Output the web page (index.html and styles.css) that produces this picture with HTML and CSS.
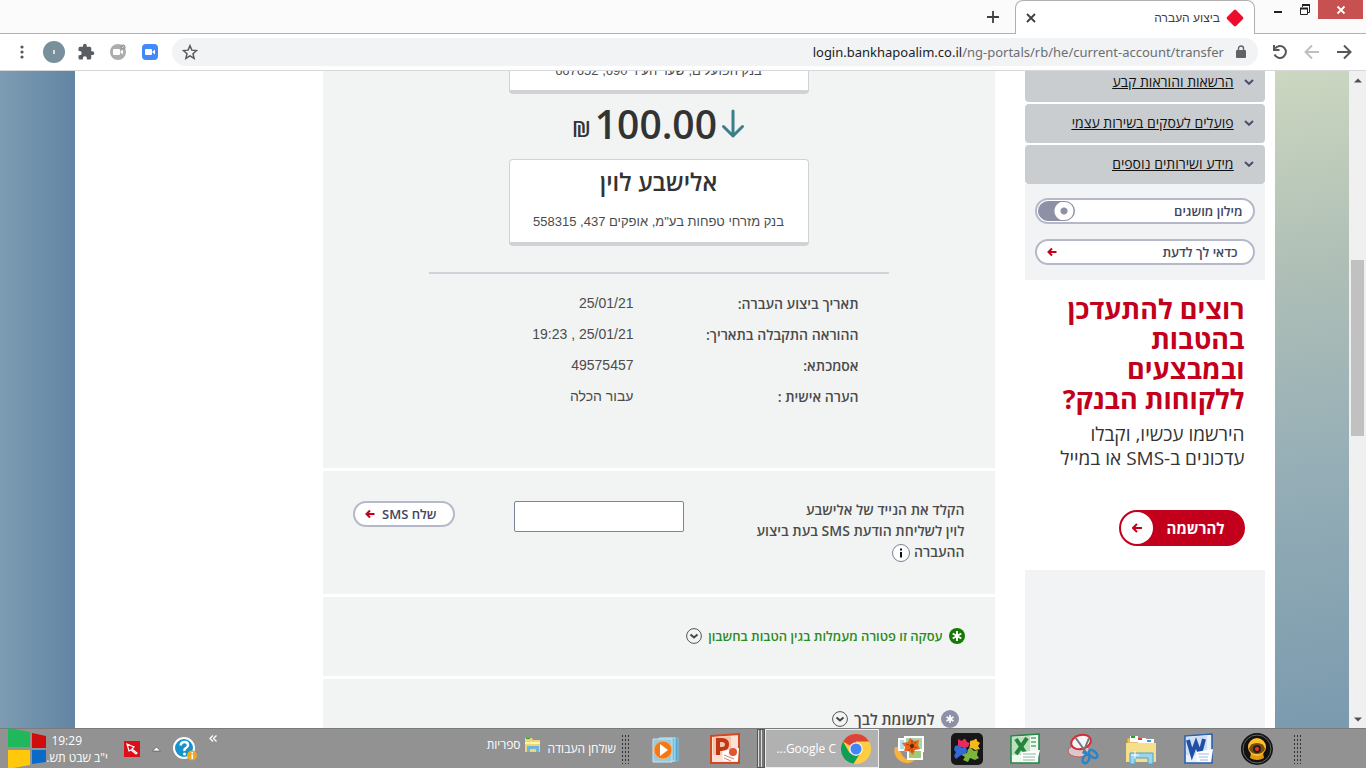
FILE: index.html
```html
<!DOCTYPE html>
<html lang="he" dir="rtl">
<head>
    <meta charset="UTF-8">
    <meta name="viewport" content="width=device-width, initial-scale=1.0">
    <title>ביצוע העברה</title>
    <link rel="stylesheet" href="styles.css">
</head>
<body>
    <header class="browser">
        <div class="tab-strip">
            <div class="window-controls">
                <button class="win-btn win-close" aria-label="סגור חלון"><svg width="10" height="10" viewBox="0 0 10 10"><path d="M1.5 1.5l7 7M8.500 1.500l-7 7" stroke="#fff" stroke-width="1.800"/></svg></button>
                <button class="win-btn" aria-label="שחזר"><svg width="12" height="12" viewBox="0 0 12 12" fill="none" stroke="#222"><path d="M3.500 3V1.500h7v7H9M1.500 4.500h7v6h-7z"/><path d="M1 4.500h8M3 1h8" stroke-width="2"/></svg></button>
                <button class="win-btn" aria-label="מזער"><svg width="12" height="12" viewBox="0 0 12 12"><path d="M2 7h8v2H2z" fill="#222"/></svg></button>
            </div>
            <div class="tab">
                <svg class="tab-icon" width="18" height="18" viewBox="0 0 18 18"><path d="M9 .5Q9.600.5 10 1l7 7q.8 1 0 2l-7 7q-1 .8-2 0L1 10Q.2 9 1 8l7-7q.4-.5 1-.5z" fill="#ed0c2e"/></svg>
                <span class="tab-title">ביצוע העברה</span>
                <button class="plain" aria-label="סגור כרטיסייה"><svg width="10" height="10" viewBox="0 0 10 10"><path d="M1 1l8 8M9 1L1 9" stroke="#3c4043" stroke-width="1.800"/></svg></button>
            </div>
            <button class="plain new-tab" aria-label="כרטיסייה חדשה"><svg width="12" height="12" viewBox="0 0 12 12"><path d="M6 0v12M0 6h12" stroke="#3c4043" stroke-width="1.800"/></svg></button>
        </div>
        <div class="toolbar">
            <button class="tool" aria-label="קדימה"><svg width="16" height="16" viewBox="0 0 16 16" fill="none" stroke="#55585c" stroke-width="2"><path d="M1 8h13M8 1.500L14.500 8 8 14.500"/></svg></button>
            <button class="tool" aria-label="אחורה"><svg width="16" height="16" viewBox="0 0 16 16" fill="none" stroke="#bdbfc2" stroke-width="2"><path d="M15 8H2M8 1.500L1.500 8 8 14.500"/></svg></button>
            <button class="tool" aria-label="טען מחדש"><svg width="16" height="16" viewBox="0 0 16 16" fill="none" stroke="#55585c" stroke-width="2"><path d="M3 4.500a6 6 0 1 1-.5 6"/><path d="M2 1v5h5.500"/></svg></button>
            <div class="omnibox">
                <svg width="10" height="14" viewBox="0 0 10 14"><path d="M1 5h8q1 0 1 1v6q0 1-1 1H1q-1 0-1-1V6q0-1 1-1z" fill="#5f6368"/><path d="M2.500 5.500V3.500a2.500 2.500 0 0 1 5 0v2" fill="none" stroke="#5f6368" stroke-width="1.400"/></svg>
                <div class="url" role="textbox" aria-label="כתובת" dir="ltr"><span class="host">login.bankhapoalim.co.il</span>/ng-portals/rb/he/current-account/transfer</div>
                <button class="plain star" aria-label="סימנייה"><svg width="16" height="16" viewBox="0 0 24 24"><path d="M12 2.500l2.800 6.700 7.200.6-5.500 4.700 1.700 7L12 17.700l-6.200 3.800 1.700-7L2 9.800l7.200-.6z" fill="none" stroke="#55585c" stroke-width="2.200"/></svg></button>
            </div>
            <button class="tool" aria-label="Zoom"><svg width="16" height="16" viewBox="0 0 16 16"><rect width="16" height="16" rx="4" fill="#4289fa"/><rect x="3" y="5" width="7" height="6" rx="1" fill="#fff"/><path d="M10.500 7.500L13 5.500v5l-2.500-2z" fill="#fff"/></svg></button>
            <button class="tool" aria-label="תוסף"><svg width="18" height="18" viewBox="0 0 18 18"><circle cx="9" cy="9" r="8" fill="#adadad"/><rect x="4" y="6" width="7" height="6" rx="1" fill="#fff"/><path d="M11.500 8.500L14 6.500v5l-2.500-2z" fill="#fff"/><circle cx="14" cy="4" r="2.500" fill="#999"/><path d="M13 5l2-2" stroke="#ddd"/></svg></button>
            <button class="tool" aria-label="תוספים"><svg width="18" height="18" viewBox="0 0 24 24"><path d="M20.500 11H19V7a2 2 0 0 0-2-2h-4V3.500a2.500 2.500 0 0 0-5 0V5H4a2 2 0 0 0-2 2v3.800h1.500a2.700 2.700 0 0 1 0 5.400H2V20a2 2 0 0 0 2 2h3.800v-1.500a2.700 2.700 0 0 1 5.400 0V22H17a2 2 0 0 0 2-2v-4h1.500a2.500 2.500 0 0 0 0-5z" fill="#5a5d62"/></svg></button>
            <button class="tool" aria-label="פרופיל"><svg width="22" height="22" viewBox="0 0 22 22"><circle cx="11" cy="11" r="11" fill="#78909c"/><path d="M10 9h2v4h-2z" fill="#d5dde0"/></svg></button>
            <button class="tool" aria-label="תפריט"><svg width="4" height="14" viewBox="0 0 4 14" fill="#55585c"><circle cx="2" cy="2" r="1.600"/><circle cx="2" cy="7" r="1.600"/><circle cx="2" cy="12" r="1.600"/></svg></button>
        </div>
    </header>

    <div class="viewport">
        <div class="scrollbar">
            <svg width="8" height="5" viewBox="0 0 8 5"><path d="M0 4.500L4 .5l4 4z" fill="#505050"/></svg>
            <div class="thumb"></div>
            <svg width="8" height="5" viewBox="0 0 8 5"><path d="M0 .5l4 4 4-4z" fill="#505050"/></svg>
        </div>
        <div class="backdrop">
            <div class="page">
                <aside class="sidebar">
                    <nav class="menu">
                        <a href="#" class="menu-item"><svg width="10" height="6" viewBox="0 0 10 6"><path d="M1 1l4 3.800L9 1" fill="none" stroke="#474f70" stroke-width="2"/></svg><span>הרשאות והוראות קבע</span></a>
                        <a href="#" class="menu-item"><svg width="10" height="6" viewBox="0 0 10 6"><path d="M1 1l4 3.800L9 1" fill="none" stroke="#474f70" stroke-width="2"/></svg><span>פועלים לעסקים בשירות עצמי</span></a>
                        <a href="#" class="menu-item"><svg width="10" height="6" viewBox="0 0 10 6"><path d="M1 1l4 3.800L9 1" fill="none" stroke="#474f70" stroke-width="2"/></svg><span>מידע ושירותים נוספים</span></a>
                    </nav>
                    <div class="tools">
                        <label class="pill pill-toggle">מילון מושגים <input type="checkbox" class="toggle"></label>
                        <button class="pill pill-tip">כדאי לך לדעת <svg width="10" height="10" viewBox="0 0 10 10"><path d="M9.500 5H2M5 1.500L1.500 5 5 8.500" fill="none" stroke="#c3001b" stroke-width="2"/></svg></button>
                    </div>
                    <div class="promo">
                        <h2>רוצים להתעדכן<br>בהטבות<br>ובמבצעים<br>ללקוחות הבנק?</h2>
                        <p>הירשמו עכשיו, וקבלו<br>עדכונים ב-SMS או במייל</p>
                        <button class="signup">להרשמה <span class="signup-arrow"><svg width="10" height="10" viewBox="0 0 10 10"><path d="M10 5H2M5 1L1 5l4 4" fill="none" stroke="#c3001b" stroke-width="2"/></svg></span></button>
                    </div>
                    <div class="banner"></div>
                </aside>

                <main class="content">
                    <section class="summary">
                        <div class="account account-from">
                            <p>בנק הפועלים, שער העיר 690, 667652</p>
                        </div>
                        <div class="amount">
                            <svg width="24" height="30" viewBox="0 0 24 30"><path d="M12 2v25M2.500 17.500l9.500 9.500 9.500-9.500" fill="none" stroke="#3a7f8b" stroke-width="3" stroke-linecap="round" stroke-linejoin="round"/></svg>
                            <span class="sum">100.00</span>
                            <span class="currency">₪</span>
                        </div>
                        <div class="account">
                            <h1>אלישבע לוין</h1>
                            <p>בנק מזרחי טפחות בע"מ, אופקים 437, 558315</p>
                        </div>
                        <dl class="details">
                            <dt>תאריך ביצוע העברה:</dt><dd>25/01/21</dd>
                            <dt>ההוראה התקבלה בתאריך:</dt><dd><bdi dir="ltr">19:23 , 25/01/21</bdi></dd>
                            <dt>אסמכתא:</dt><dd>49575457</dd>
                            <dt>הערה אישית :</dt><dd>עבור הכלה</dd>
                        </dl>
                    </section>
                    <section class="sms">
                        <label class="sms-label" for="phone">הקלד את הנייד של אלישבע<br>לוין לשליחת הודעת SMS בעת ביצוע<br>ההעברה <svg width="18" height="18" viewBox="0 0 18 18"><circle cx="9" cy="9" r="8.500" fill="#fff" stroke="#7d8097"/><path d="M8 4.500h2v2H8zM8 8h2v5.500H8z" fill="#111"/></svg></label>
                        <input type="tel" id="phone" class="phone">
                        <button class="pill pill-send">שלח SMS <svg width="10" height="10" viewBox="0 0 10 10"><path d="M9.500 5H2M5 1.500L1.500 5 5 8.500" fill="none" stroke="#c3001b" stroke-width="2"/></svg></button>
                    </section>
                    <section class="fees">
                        <button class="expand expand-green">
                            <svg width="16" height="16" viewBox="0 0 16 16"><circle cx="8" cy="8" r="8" fill="#147a05"/><path d="M8 3v10M3.700 5.500l8.600 5M12.300 5.500l-8.600 5" stroke="#fff" stroke-width="2"/></svg>
                            <span>עסקה זו פטורה מעמלות בגין הטבות בחשבון</span>
                            <svg width="16" height="16" viewBox="0 0 16 16" fill="none"><circle cx="8" cy="8" r="7.400" stroke="#555"/><path d="M4.500 6.500L8 9.500l3.500-3" stroke="#444" stroke-width="2"/></svg>
                        </button>
                    </section>
                    <section class="notice">
                        <button class="expand expand-note">
                            <svg width="18" height="18" viewBox="0 0 18 18"><circle cx="9" cy="9" r="9" fill="#8e91a6"/><path d="M9 5v8M5.500 7l7 4M12.500 7l-7 4" stroke="#fff" stroke-width="1.600"/></svg>
                            <span>לתשומת לבך</span>
                            <svg width="16" height="16" viewBox="0 0 16 16" fill="none"><circle cx="8" cy="8" r="7.400" stroke="#555"/><path d="M4.500 6.500L8 9.500l3.500-3" stroke="#444" stroke-width="2"/></svg>
                        </button>
                    </section>
                </main>
            </div>
        </div>
    </div>

    <footer class="taskbar">
        <div class="grip"></div>
        <div class="apps">
            <button class="app" aria-label="מצלמה"><svg width="32" height="32" viewBox="0 0 32 32"><circle cx="16" cy="16" r="16" fill="#111"/><circle cx="16" cy="16" r="14" fill="none" stroke="#666"/><path d="M10 20h12l1 5q-7 4-14 0z" fill="#e09a12"/><circle cx="16" cy="14" r="9" fill="#fdc02c"/><path d="M8 16q1-6 8-6t8 6q-2 5-8 5t-8-5z" fill="#7d4b05"/><circle cx="16" cy="16" r="4" fill="#222"/><circle cx="16" cy="16" r="2" fill="#f03030"/></svg></button>
            <button class="app" aria-label="Word"><svg width="32" height="32" viewBox="0 0 32 32"><path d="M2 3l27-2v29H2z" fill="#e9f1fb" stroke="#2d62ae" stroke-width="1.600"/><path d="M3 4l21-1.500V22H3z" fill="#cfdff5"/><path d="M5 7l4 14 4-11 4 11 4-15" fill="none" stroke="#2050a4" stroke-width="4"/><path d="M13 19l17-3-2 13H14z" fill="#fff"/><path d="M15 21h11M16 24h9M17 27h8" stroke="#a1b9dc"/></svg></button>
            <button class="app" aria-label="סייר הקבצים"><svg width="32" height="32" viewBox="0 0 32 32"><path d="M2 5h9l2 3h16v20H2z" fill="#e5c45f" stroke="#b99634"/><path d="M5 3h8v6H5zM13 5h8v5h-8zM21 6h8v5h-8z" fill="#fff"/><path d="M6 3h4v2H6z" fill="#18aa30"/><path d="M13 5h4v2h-4z" fill="#e23d2e"/><path d="M22 7h4v2h-4z" fill="#3799df"/><path d="M1 10h30v19H1z" fill="#f5df8c"/><path d="M5 31V20h23v11h-5v-6H10v6z" fill="#9cd4ed" stroke="#4fa3c8"/><path d="M10 18v8M6 22h8" stroke="#fff"/></svg></button>
            <button class="app" aria-label="כלי החיתוך"><svg width="32" height="32" viewBox="0 0 32 32"><ellipse cx="12" cy="18" rx="11" ry="6" fill="#d9c9cc" stroke="#c65b61"/><ellipse cx="14" cy="9" rx="10" ry="7" transform="rotate(-15 14 9)" fill="#f5f5f8" stroke="#d52b34" stroke-width="2"/><path d="M8 4l13 18M22 5l-6 15" stroke="#777" stroke-width="2"/><path d="M16 19l4 2" stroke="#2b84c7" stroke-width="3"/><ellipse cx="19" cy="26" rx="3" ry="4.500" transform="rotate(25 19 26)" fill="none" stroke="#2b84c7" stroke-width="2.500"/><ellipse cx="26" cy="21" rx="3" ry="5" transform="rotate(-50 26 21)" fill="none" stroke="#2b84c7" stroke-width="2.500"/></svg></button>
            <button class="app" aria-label="Excel"><svg width="32" height="32" viewBox="0 0 32 32"><path d="M2 3l28-2v29H2z" fill="#eff8ef" stroke="#268747" stroke-width="1.600"/><path d="M3 4l18-1v19H3z" fill="#bde0bc"/><path d="M7 6l10 15M18 5L7 21" stroke="#258540" stroke-width="4"/><path d="M22 5h5M22 9h5M22 13h5" stroke="#84bd8c" stroke-width="2"/><path d="M12 19l19-2-3 12H12z" fill="#fff"/><path d="M14 21h13M14 24h12M14 27h12" stroke="#8bb898"/></svg></button>
            <button class="app" aria-label="משחק"><svg width="32" height="32" viewBox="0 0 32 32"><rect width="32" height="32" rx="5" fill="#171717"/><path d="M7 6l4 2q3-5 5 1l3 1-2 4-4 1-6-2z" fill="#e52c5c"/><path d="M19 8l4-1q3-3 3 1l3 2-2 3 2 3-5 1-3-2-3 1 1-4z" fill="#f3b91d"/><path d="M4 13l4-1 3 3 4-1 1 4-2 5-4-1-5 4-2-3 2-4-2-2z" fill="#3369d5"/><path d="M17 16l3-1 3 3 4-1-1 5 2 3-4 2-5-2-2 4-5-2 2-3-3-2 5-2z" fill="#7cb53b"/></svg></button>
            <button class="app" aria-label="גלריית תמונות"><svg width="32" height="32" viewBox="0 0 32 32"><path d="M2 14q-3 10 7 15 8 3 13-2-13 2-16-13z" fill="#f8b43c"/><path d="M6 6h8v11H6z" fill="#b8dcec" stroke="#fff" stroke-width="2"/><path d="M12 4h18v14H12z" fill="#a8d5ae" stroke="#fff" stroke-width="2"/><path d="M15 17h14v9H15z" fill="#9acb78" stroke="#fff" stroke-width="2"/><path d="M17 5l4 3 5-1-1 5 2 4-5 1-2 5-4-4-5 1 1-5-3-4 6-1z" fill="#e9691a"/><path d="M19 7v12M13 11l11 4M23 9l-8 9" stroke="#b83b05"/><circle cx="19" cy="13" r="2" fill="#5f2605"/></svg></button>
        </div>
        <button class="app-active"><svg width="30" height="30" viewBox="0 0 30 30"><circle cx="15" cy="15" r="15" fill="#ffcd42"/><path d="M15 15L2 7.500A15 15 0 0 1 28 7.500H15z" fill="#db4437"/><path d="M2 7.500l6.500 11.300L15 22l-2.500 7.800A15 15 0 0 1 2 7.500z" fill="#0f9d58"/><path d="M12.500 29.800L19 19.500 15 22l-6-2z" fill="#0f9d58"/><circle cx="15" cy="15" r="6.800" fill="#f1f1f1"/><circle cx="15" cy="15" r="5.500" fill="#4285f4"/></svg><span dir="ltr">...Google C</span></button>
        <div class="stack-edge"></div>
        <div class="apps apps-end">
            <button class="app" aria-label="PowerPoint"><svg width="32" height="32" viewBox="0 0 32 32"><path d="M2 3l28-2v29H2z" fill="#fbe2d6" stroke="#d5481d" stroke-width="2"/><path d="M4 4l18-1v19H4z" fill="#f6c4ac"/><path d="M9 22V7h4q5 0 5 4.500T13 16H9" fill="none" stroke="#bf3713" stroke-width="4"/><path d="M13 18l17-3-1 13H14z" fill="#fff"/><circle cx="24" cy="19" r="4" fill="#e3552e"/><path d="M15 22l10 4M15 25l7 3" stroke="#d88067"/></svg></button>
            <button class="app" aria-label="נגן מדיה"><svg width="32" height="32" viewBox="0 0 32 32"><path d="M10 5h17v23H10z" fill="#4fa5ce" stroke="#7dc5e5"/><path d="M8 5h16v23H8z" fill="#74bddc" stroke="#b8e1f2"/><path d="M2 6h19v23H2z" fill="#94cae3" stroke="#c7e7f3"/><circle cx="12" cy="17" r="9" fill="#f27a16" stroke="#ffb76a"/><path d="M9 11l8 6-8 6z" fill="#fff"/></svg></button>
        </div>
        <div class="grip"></div>
        <span class="task-text">שולחן העבודה</span>
        <a href="#" class="library"><svg width="17" height="16" viewBox="0 0 17 16"><path d="M1 1h7l1 2h7v12H1z" fill="#edd678"/><path d="M2 1h4v1H2z" fill="#2aa53a"/><path d="M1 5h15v2H1z" fill="#fff3ae"/><path d="M3 15V9h12v6h-3v-3H6v3z" fill="#6cb6dc"/></svg>ספריות</a>
        <div class="tray">
            <button class="plain more" aria-label="הצג עוד"><svg width="8" height="7" viewBox="0 0 8 7"><path d="M4 .5l-3 3 3 3M7.500.5l-3 3 3 3" fill="none" stroke="#fff" stroke-width="1.300"/></svg></button>
            <button class="plain" aria-label="עזרה"><svg width="24" height="24" viewBox="0 0 24 24"><circle cx="11" cy="11" r="10" fill="#1693ce" stroke="#fff" stroke-width="2"/><path d="M7.500 8.500q.5-3.500 4-3.500t3.500 3q0 2-2 3t-1.500 3" fill="none" stroke="#fff" stroke-width="2.400"/><circle cx="11.500" cy="17" r="1.500" fill="#fff"/><circle cx="19" cy="18.500" r="5" fill="#efa91f"/><path d="M18.500 15h1.500v1.500h-1.500zM18.500 17.500h1.500V22h-1.500z" fill="#fff"/></svg></button>
            <button class="plain" aria-label="סמלים מוסתרים"><svg width="9" height="6" viewBox="0 0 9 6"><path d="M.5 5l4-4 4 4z" fill="#fff" stroke="#444" stroke-width=".6"/></svg></button>
            <button class="plain" aria-label="סמן"><svg width="16" height="16" viewBox="0 0 16 16"><path d="M0 0h16v16H0z" fill="#dc0f19"/><path d="M3 3l7 3-2 2 5 4-1 1-5-4-2 1z" fill="none" stroke="#fff" stroke-width="1.200"/></svg></button>
            <div class="clock"><time>19:29</time><span>י"ב שבט תש...</span></div>
        </div>
        <button class="start" aria-label="התחל"><svg width="38" height="41" viewBox="0 0 38 41"><path d="M0 0l22 4v15H0z" fill="#21b85c"/><path d="M24 5l14 3v12H24z" fill="#cf0d0d"/><path d="M0 22h22v15L0 41z" fill="#ffc80a"/><path d="M24 22h14v12l-14 2z" fill="#0b6ac7"/></svg></button>
    </footer>
</body>
</html>
```
FILE: styles.css
```css
* { box-sizing: border-box; }
body { margin: 0; height: 100vh; display: flex; flex-direction: column; overflow: hidden; font-family: "Open Sans", "Liberation Sans", sans-serif; font-size: 14px; color: #4b4b4b; background: #fff; }
h1, h2, p, dl, dd { margin: 0; }
button { font: inherit; color: inherit; cursor: pointer; }
svg { display: block; flex: none; }
.plain { padding: 0; border: none; background: none; }

/* browser window */
.tab-strip { height: 34px; display: flex; background: #fbfbfb; border-bottom: 1px solid #b0b0b0; padding-right: 3px; }
.window-controls { display: flex; align-items: flex-start; width: 108px; }
.win-btn { width: 27px; height: 19px; border: none; padding: 0; background: none; display: flex; align-items: center; justify-content: center; }
.win-close { width: 45px; background: #c75050; }
.tab { width: 240px; height: 34px; display: flex; align-items: center; padding: 0 10px; background: #fff; border: 1px solid #b0b0b0; border-bottom: none; border-radius: 8px 8px 0 0; }
.tab-icon { margin-left: 6px; }
.tab-title { flex: 1; font-size: 12px; font-family: "Liberation Sans", sans-serif; color: #3c4043; }
.new-tab { margin-right: 16px; }
.toolbar { height: 37px; display: flex; align-items: center; padding: 0 6px; background: #fff; border-bottom: 1px solid #d5d7da; }
.tool { width: 32px; height: 32px; padding: 0; border: none; background: none; display: flex; align-items: center; justify-content: center; }
.omnibox { flex: 1; height: 28px; margin: 0 6px; padding: 0 12px 0 10px; display: flex; align-items: center; gap: 12px; border-radius: 14px; background: #f1f3f4; }
.url { flex: 1; text-align: right; font-family: "Noto Sans", sans-serif; font-size: 13px; color: #6b6f73; white-space: nowrap; }
.host { color: #202124; }

.viewport { flex: 1; min-height: 0; display: flex; overflow: hidden; }
.scrollbar { width: 17px; display: flex; flex-direction: column; align-items: center; padding: 7px 0 6px; background: #f0f0f0; }
.thumb { width: 13px; height: 176px; margin: 177px 0 auto; background: #c1c1c1; }
.backdrop { flex: 1; overflow: hidden; background: linear-gradient(90deg, #7d9cb3, #6285a4) left / 75px 100% no-repeat, linear-gradient(170deg, #ccd7c0, #afbfb6 30%, #94adb6 62%, #7a9aae) right / 75px 100% no-repeat; }
.page { max-width: 1200px; margin: 0 auto; min-height: 100%; padding-right: 10px; display: flex; gap: 30px; background: #fff; }

/* side column */
.sidebar { width: 240px; margin-top: -8px; display: flex; flex-direction: column; }
.menu { display: flex; flex-direction: column; gap: 2px; background: #fff; }
.menu-item { height: 39px; display: flex; align-items: center; gap: 10px; padding: 0 11px 2px; border-radius: 4px; background: #cacdd0; color: #111; font-weight: 500; }
.menu-item span { text-decoration: underline; }
.tools { padding: 14px 10px 15px; display: flex; flex-direction: column; gap: 15px; background: #f2f3f5; }
.pill { height: 26px; display: flex; align-items: center; justify-content: space-between; border: 2px solid #b5b8c8; border-radius: 13px; background: #fff; color: #3f465c; font-size: 13px; font-weight: 600; line-height: 18px; }
.pill-toggle { padding: 0 10px 0 0; }
.pill-tip { padding: 0 15px 0 10px; }
.toggle { appearance: none; width: 37px; height: 20px; margin: 0 0 0 1px; border: 1px solid #8e91a6; border-radius: 10px; background: radial-gradient(circle at 25px 9px, #8e91a6 3px, #fff 4px, #fff 9px, #8e91a6 10px); }
.promo { height: 290px; padding: 14px 20px 24px 10px; display: flex; flex-direction: column; align-items: flex-start; background: #fff; }
.promo h2 { color: #c3001b; font-size: 27px; line-height: 30px; font-weight: 700; white-space: nowrap; }
.promo p { margin-top: 8px; font-size: 19px; line-height: 24px; color: #333; white-space: nowrap; }
.signup { width: 126px; height: 36px; margin-top: auto; padding: 0 18px 0 0; display: flex; align-items: center; justify-content: space-between; border: 2px solid #c3001b; border-radius: 18px; background: #c3001b; color: #fff; font-size: 15px; font-weight: 700; }
.signup-arrow { width: 32px; height: 32px; display: flex; align-items: center; justify-content: center; border-radius: 50%; background: #fff; }
.banner { flex: 1; background: #f2f3f5; }

/* transfer */
.content { width: 672px; margin-top: -9px; display: flex; flex-direction: column; gap: 3px; }
.content section { background: #f2f4f4; }
.summary { height: 406px; display: flex; flex-direction: column; align-items: center; }
.account { width: 300px; height: 87px; padding: 7px 0; border: 1px solid #d0d2d6; border-bottom-width: 4px; border-radius: 4px; background: #fff; text-align: center; }
.account h1 { font-size: 24px; line-height: 30px; font-weight: 600; color: #333; }
.account p { margin-top: 15px; font-family: "Liberation Sans", sans-serif; font-size: 13px; line-height: 20px; }
.account-from { height: 32px; padding: 0; border-top: none; border-radius: 0 0 4px 4px; }
.account-from p { margin: 0; line-height: 18px; }
.amount { height: 65px; padding-bottom: 6px; display: flex; align-items: center; gap: 4px; color: #333; }
.sum { font-size: 39px; font-weight: 600; line-height: 40px; }
.currency { font-size: 22px; line-height: 24px; padding-top: 8px; font-weight: 600; }
.details { width: 460px; margin-top: 26px; padding: 14px 30px 0 0; border-top: 2px solid #d0d2d9; display: grid; grid-template-columns: 225px 1fr; line-height: 31px; }
.details dt { font-weight: 600; }
.details dd { font-family: "Liberation Sans", sans-serif; }
.sms { height: 123px; padding: 30px; display: flex; align-items: flex-start; }
.sms-label { width: 281px; line-height: 21px; margin-top: -2px; font-weight: 600; }
.sms-label svg { display: inline-block; vertical-align: middle; }
.phone { width: 170px; height: 31px; border: 1px solid #7d8497; border-radius: 2px; background: #fff; }
.pill-send { width: 102px; margin-right: auto; padding: 0 16px 0 10px; }
.fees { height: 79px; padding: 0 30px 2px; display: flex; align-items: center; }
.notice { flex: 1; padding: 30px 36px; }
.expand { display: flex; align-items: center; gap: 6px; padding: 0; border: none; background: none; line-height: 20px; font-weight: 600; }
.expand-green { color: #2e8b22; font-size: 13px; }
.expand-note { font-size: 15px; }

/* taskbar */
.taskbar { height: 40px; flex: none; display: flex; align-items: center; padding: 0 64px 0 8px; background: #929292; border-top: 1px solid #7b7b7b; color: #fff; font-family: "Open Sans", sans-serif; font-size: 12px; }
.grip { width: 9px; height: 30px; background: radial-gradient(circle, #333 1px, transparent 1px) 0 0 / 3px 4px; }
.apps { display: flex; margin: 0 7px 0 1px; }
.apps-end { margin: 0 3px 0 8px; }
.app { width: 58px; height: 36px; padding: 0; border: none; background: none; display: flex; align-items: center; justify-content: center; }
.stack-edge { width: 8px; height: 39px; border: 1px solid #555; background: repeating-linear-gradient(90deg, #ddd 0 1px, #777 1px 3px); }
.app-active { width: 114px; height: 39px; padding: 0 7px; display: flex; align-items: center; gap: 5px; border: 1px solid #eee; background: #b1b1b1; color: #fff; white-space: nowrap; }
.task-text { margin-right: 5px; white-space: nowrap; }
.library { display: flex; align-items: center; gap: 3px; margin: 0 7px 8px 0; color: #fff; text-decoration: none; white-space: nowrap; }
.tray { display: flex; align-items: center; gap: 12px; margin-right: auto; }
.more { padding-bottom: 20px; }
.clock { width: 76px; margin-right: 4px; display: flex; flex-direction: column; align-items: flex-start; line-height: 17px; white-space: nowrap; }
.clock time { margin-right: 26px; }
.start { width: 38px; padding: 0; border: none; background: none; margin-right: -14px; position: relative; }
```
